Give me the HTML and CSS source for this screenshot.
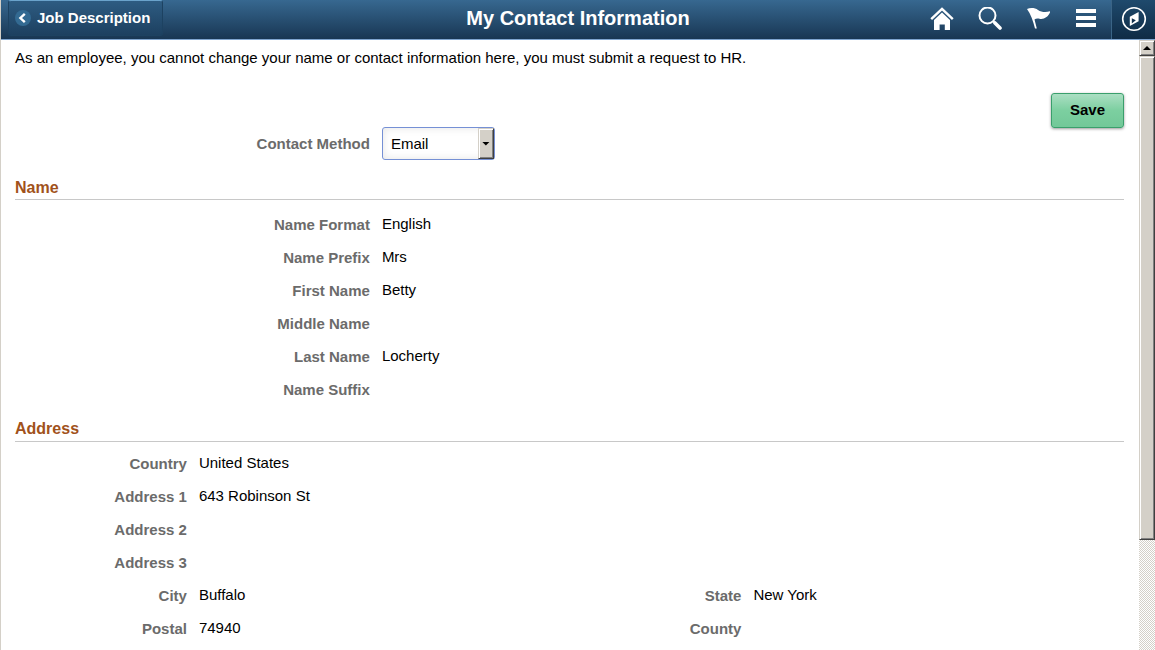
FILE: index.html
```html
<!DOCTYPE html>
<html lang="en">

<head>
  <meta charset="utf-8">
  <title>My Contact Information</title>
  <link rel="stylesheet" href="styles.css">
</head>

<body>
  <header class="banner">
    <div class="banner-left">
      <a class="back" href="#">
        <svg width="16" height="16" viewBox="0 0 16 16" aria-hidden="true">
          <circle cx="8" cy="8" r="8" fill="#336a92" />
          <path d="M9.8 3.8 5.4 8l4.4 4.2" fill="none" stroke="#fff" stroke-width="2.4" />
        </svg>
        Job Description
      </a>
    </div>
    <h1>My Contact Information</h1>
    <nav class="tools">
      <a class="tool" href="#" aria-label="Home">
        <svg width="24" height="24" viewBox="0 0 24 24">
          <path d="M1.200 12.200 12 1.800l10.800 10.400" fill="none" stroke="#fff" stroke-width="2.400" />
          <path d="M12 5.400 20 13v10h-5.200v-5.400H9.600V23H4V13z" fill="#fff" />
        </svg>
      </a>
      <a class="tool" href="#" aria-label="Search">
        <svg width="24" height="24" viewBox="0 0 24 24" fill="none" stroke="#fff">
          <circle cx="9.500" cy="8.500" r="8" stroke-width="2" />
          <path d="m15 14 2 2" stroke-width="2" />
          <path d="m17 16 5 5" stroke-width="3.600" stroke-linecap="round" />
        </svg>
      </a>
      <a class="tool" href="#" aria-label="Notifications">
        <svg width="24" height="24" viewBox="0 0 24 24" fill="#fff">
          <path d="M1 2C4 .6 9 .6 12 3c3.600 2.400 8 2.600 12.500 1.200-1.500 5-6 8.600-11 7.600-2-.4-3.800-.2-5 .6L10.800 21.500H9C7.200 14 4.600 7 1 2z" />
        </svg>
      </a>
      <a class="tool" href="#" aria-label="Actions">
        <svg width="24" height="24" viewBox="0 0 24 24" fill="#fff">
          <path d="M2 2h20v4H2zM2 9h20v4H2zM2 16h20v4H2z" />
        </svg>
      </a>
      <a class="navbar" href="#" aria-label="NavBar">
        <svg width="26" height="26" viewBox="0 0 26 26">
          <circle cx="13" cy="13" r="11.300" fill="none" stroke="#fff" stroke-width="1.600" />
          <path d="M8.800 10.800 17.600 6v9.200L8.800 20z" fill="#fff" />
          <path d="m10.800 12.200 4 2-4 3.200z" fill="#12304d" />
        </svg>
      </a>
    </nav>
  </header>

  <div class="page">
    <main class="content">
      <p class="intro">As an employee, you cannot change your name or contact information here, you must submit a request to HR.</p>

      <form>
        <div class="actions">
          <button class="save" type="button">Save</button>
        </div>
        <div class="method">
          <label for="method">Contact Method</label>
          <div class="select">
            <select id="method">
              <option>Email</option>
              <option>Phone</option>
            </select>
            <span class="select-arrow"></span>
          </div>
        </div>
      </form>

      <h2>Name</h2>
      <dl class="fields name">
        <div class="field"><dt>Name Format</dt><dd>English</dd></div>
        <div class="field"><dt>Name Prefix</dt><dd>Mrs</dd></div>
        <div class="field"><dt>First Name</dt><dd>Betty</dd></div>
        <div class="field"><dt>Middle Name</dt><dd></dd></div>
        <div class="field"><dt>Last Name</dt><dd>Locherty</dd></div>
        <div class="field"><dt>Name Suffix</dt><dd></dd></div>
      </dl>

      <h2>Address</h2>
      <dl class="fields address">
        <div class="field wide"><dt>Country</dt><dd>United States</dd></div>
        <div class="field wide"><dt>Address 1</dt><dd>643 Robinson St</dd></div>
        <div class="field wide"><dt>Address 2</dt><dd></dd></div>
        <div class="field wide"><dt>Address 3</dt><dd></dd></div>
        <div class="field"><dt>City</dt><dd>Buffalo</dd></div>
        <div class="field"><dt>State</dt><dd>New York</dd></div>
        <div class="field"><dt>Postal</dt><dd>74940</dd></div>
        <div class="field"><dt>County</dt><dd></dd></div>
      </dl>
    </main>

    <div class="scrollbar" aria-hidden="true">
      <div class="scroll-up"></div>
      <div class="scroll-thumb"></div>
    </div>
  </div>
</body>

</html>
```
FILE: styles.css
```css
* {
  box-sizing: border-box;
}

body {
  margin: 0;
  height: 100vh;
  display: flex;
  flex-direction: column;
  overflow: hidden;
  border-left: 1px solid #d4d0c8;
  background: #fff;
  color: #000;
  font: 15px/18px "Liberation Sans", Arial, sans-serif;
}

/* banner */
.banner {
  flex: none;
  height: 40px;
  display: grid;
  grid-template-columns: 1fr auto 1fr;
  background: linear-gradient(#376890, #183653);
  border-bottom: 1px solid #7fa5d0;
}

.banner-left {
  padding-left: 7px;
}

.back {
  display: inline-flex;
  align-items: center;
  gap: 6px;
  height: 36px;
  padding: 0 12px 0 6px;
  border: 1px solid #1d4261;
  border-top-color: #6aa3cb;
  border-radius: 3px;
  background: linear-gradient(#2e5c82, #1d4060);
  color: #fff;
  font-weight: bold;
  text-decoration: none;
}

h1 {
  margin: 0;
  color: #fff;
  font-size: 20px;
  line-height: 36px;
}

.tools {
  display: flex;
  justify-content: flex-end;
  gap: 24px;
}

.tool {
  display: flex;
  padding-top: 7px;
}

.navbar {
  display: flex;
  justify-content: center;
  width: 44px;
  margin-left: -11px;
  padding-top: 6px;
  border-left: 1px solid #3a6486;
  background: linear-gradient(#1f4a6d, #0f2b45);
}

/* page */
.page {
  flex: 1;
  display: flex;
  min-height: 0;
}

.content {
  flex: 1;
  padding: 9px 15px 0 14px;
  overflow: hidden;
}

.intro {
  margin: 0;
}

.actions {
  display: flex;
  justify-content: flex-end;
  padding-top: 26px;
}

.save {
  height: 35px;
  padding: 0 18px 2px;
  border: 1px solid #3a9f6c;
  border-radius: 3px;
  background: linear-gradient(#abdfc3, #7ccfa0 50%, #72c898);
  box-shadow: 0 1px 3px rgba(0, 0, 0, 0.4);
  color: #000;
  font: bold 15px/18px "Liberation Sans", Arial, sans-serif;
}

.method {
  display: flex;
  align-items: center;
  gap: 12px;
  margin-top: -1px;
}

.method label,
dt {
  color: #6b6b6b;
  font-weight: bold;
  text-align: right;
}

.method label,
.name dt {
  width: 32%;
}

.select {
  position: relative;
  width: 113px;
}

select {
  display: block;
  width: 100%;
  height: 33px;
  padding: 0 8px;
  appearance: none;
  border: 1px solid #7590d5;
  border-radius: 3px;
  background: #fff;
  box-shadow: inset 0 0 8px #e4e4e4;
  color: #000;
  font: 15px/18px "Liberation Sans", Arial, sans-serif;
}

.select-arrow {
  position: absolute;
  top: 1px;
  right: 1px;
  bottom: 1px;
  width: 16px;
  display: flex;
  align-items: center;
  justify-content: center;
  border: 1px solid;
  border-color: #d4d0c8 #404040 #404040 #d4d0c8;
  background: #d4d0c8;
  box-shadow: inset 1px 1px #fff, inset -1px -1px #808080;
  pointer-events: none;
}

.select-arrow::before,
.scroll-up::before {
  content: "";
  width: 8px;
  height: 4px;
  background: #000;
  clip-path: polygon(0 0, 100% 0, 50% 100%);
}

/* sections */
h2 {
  margin: 0;
  padding: 18px 0 1px;
  border-bottom: 1px solid #c8c8c8;
  color: #a1521b;
  font-size: 16px;
  line-height: 20px;
}

.fields {
  display: grid;
  grid-auto-rows: 33px;
  margin: 0;
}

.field {
  display: flex;
  align-items: center;
  gap: 12px;
}

.name {
  padding-top: 8px;
}

.name + h2 {
  padding: 13px 0 2px;
}

.address {
  grid-template-columns: 1fr 1fr;
  padding-top: 5px;
}

.wide {
  grid-column: span 2;
}

.address dt {
  width: 31%;
}

.address .wide dt {
  width: calc(31% / 2);
}

dd {
  margin: 0;
  padding-bottom: 1px;
}

/* classic scrollbar */
.scrollbar {
  flex: none;
  width: 16px;
  background: repeating-conic-gradient(#d4d0c8 0 25%, #fff 0 50%) 0 0 / 2px 2px;
}

.scroll-up,
.scroll-thumb {
  border: 1px solid;
  border-color: #d4d0c8 #404040 #404040 #d4d0c8;
  background: #d4d0c8;
  box-shadow: inset 1px 1px #fff, inset -1px -1px #808080;
}

.scroll-up {
  height: 16px;
  display: flex;
  align-items: center;
  justify-content: center;
}

.scroll-up::before {
  clip-path: polygon(50% 0, 100% 100%, 0 100%);
}

.scroll-thumb {
  height: 79.4%;
}
```
